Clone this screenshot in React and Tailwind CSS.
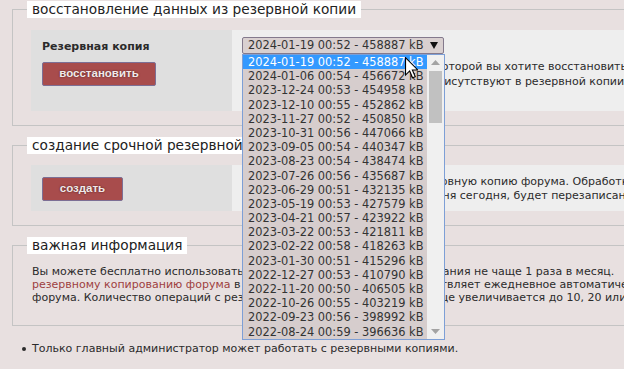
import React from "react";

const backups = [
  ["2024-01-19 00:52", "458887"],
  ["2024-01-06 00:54", "456672"],
  ["2023-12-24 00:53", "454958"],
  ["2023-12-10 00:55", "452862"],
  ["2023-11-27 00:52", "450850"],
  ["2023-10-31 00:56", "447066"],
  ["2023-09-05 00:54", "440347"],
  ["2023-08-23 00:54", "438474"],
  ["2023-07-26 00:56", "435687"],
  ["2023-06-29 00:51", "432135"],
  ["2023-05-19 00:53", "427579"],
  ["2023-04-21 00:57", "423922"],
  ["2023-03-22 00:53", "421811"],
  ["2023-02-22 00:58", "418263"],
  ["2023-01-30 00:51", "415296"],
  ["2022-12-27 00:53", "410790"],
  ["2022-11-20 00:50", "406505"],
  ["2022-10-26 00:55", "403219"],
  ["2022-09-23 00:56", "398992"],
  ["2022-08-24 00:59", "396636"],
];

function Legend({ children }) {
  return (
    <legend className="ml-[14px] bg-white px-[5px] text-[13.7px] leading-[17px] text-[#222]">
      {children}
    </legend>
  );
}

function RedButton({ children, width }) {
  return (
    <button
      className={`${width} h-[24px] rounded-[2px] border border-[#7c6f95] bg-[#a84c4c] font-['Liberation_Sans',Arial,sans-serif] text-[11.5px] font-bold text-[#f1e8e8] [text-shadow:0_0_2px_#4a2020]`}
    >
      {children}
    </button>
  );
}

function Cursor() {
  return (
    <svg
      width="13"
      height="22"
      viewBox="0 0 12 20"
      className="absolute left-[162px] top-[2px]"
    >
      <path
        d="M0.5 0.5 L0.5 16.5 L4.3 12.7 L7 19 L9.5 18 L6.8 11.8 L11.8 11.8 Z"
        fill="#fff"
        stroke="#000"
        strokeWidth="1"
      />
    </svg>
  );
}

function BackupSelect() {
  return (
    <div className="relative w-[202px]">
      <div className="flex h-[17px] items-center justify-between rounded-[2px] border border-[#83798c] bg-[#d9d0d0] pl-[5px] pr-[5px] text-[11.4px] text-[#333]">
        <span>2024-01-19 00:52 - 458887 kB</span>
        <svg width="8" height="7" viewBox="0 0 8 7">
          <path d="M0 0 H8 L4 7 Z" fill="#111" />
        </svg>
      </div>

      <div className="absolute left-0 top-[17px] z-10 flex w-[203px] border border-[#7d9fd6] bg-[#d6cdcd]">
        <ul className="w-[184px]">
          {backups.map(([date, size], i) => (
            <li
              key={date}
              className={`h-[14.2px] whitespace-nowrap pl-[5px] text-[11.4px] leading-[14.2px] ${
                i === 0 ? "bg-[#3399ff] text-white" : "text-[#333]"
              }`}
            >
              {date} - {size} kB
            </li>
          ))}
        </ul>
        <div className="flex w-[17px] flex-col items-center bg-[#f0f0f0]">
          <svg width="9" height="5" viewBox="0 0 9 5" className="mt-[5px]">
            <path d="M0 5 L4.5 0 L9 5 Z" fill="#a3a3a3" />
          </svg>
          <div className="mt-[6px] h-[52px] w-[13px] bg-[#c1c1c1]" />
          <div className="flex-1" />
          <svg width="9" height="5" viewBox="0 0 9 5" className="mb-[5px]">
            <path d="M0 0 L9 0 L4.5 5 Z" fill="#a3a3a3" />
          </svg>
        </div>
        <Cursor />
      </div>
    </div>
  );
}

export default function App() {
  return (
    <div className="h-[369px] w-[624px] overflow-hidden bg-[#e8e0e0] font-['DejaVu_Sans',Verdana,sans-serif] text-[11px] text-[#2b2b2b]">
      <div className="w-[900px] pl-[12px] pt-[1px]">
        <fieldset className="border border-[#c4c4c4] pb-[14px] pt-[12px]">
          <Legend>восстановление данных из резервной копии</Legend>
          <div className="ml-[18px] flex h-[81px]">
            <div className="w-[201px] bg-[#dfdfdf] pl-[11px] pt-[10px]">
              <div className="text-[11px] font-bold leading-[13px] text-[#2b2b2b]">
                Резервная копия
              </div>
              <div className="mt-[9px]">
                <RedButton width="w-[114px]">восстановить</RedButton>
              </div>
            </div>
            <div className="flex-1 bg-[#eeeeee] pl-[10px] pt-[7px]">
              <BackupSelect />
              <div className="mt-[5px] whitespace-nowrap leading-[15px]">
                <div>Выберите резервную версию, из которой вы хотите восстановить данные форума.</div>
                <div>Внимание! Данные, которые не присутствуют в резервной копии, будут удалены.</div>
              </div>
            </div>
          </div>
        </fieldset>

        <fieldset className="mt-[11px] border border-[#c4c4c4] pb-[14px] pt-[11px]">
          <Legend>создание срочной резервной копии</Legend>
          <div className="ml-[18px] flex h-[46px]">
            <div className="w-[201px] bg-[#dfdfdf] pl-[11px] pt-[12px]">
              <RedButton width="w-[81px]">создать</RedButton>
            </div>
            <div className="flex-1 whitespace-nowrap bg-[#eeeeee] pl-[12px] pt-[10px] leading-[14px]">
              <div>Вы можете создать срочную резервную копию форума. Обработка запроса займёт некоторое время.</div>
              <div>Копия созданная уже в течение дня сегодня, будет перезаписана.</div>
            </div>
          </div>
        </fieldset>

        <fieldset className="mt-[11px] border border-[#c4c4c4] pb-[21px] pt-[11px]">
          <Legend>важная информация</Legend>
          <div className="ml-[19px] whitespace-nowrap leading-[13px]">
            <div>Вы можете бесплатно использовать все функции резервного копирования не чаще 1 раза в месяц.</div>
            <div>
              <span className="text-[#9e4040]">резервному копированию форума</span> в платных версиях система осуществляет ежедневное автоматическое создание копий
            </div>
            <div>форума. Количество операций с резервными копиями в течение месяце увеличивается до 10, 20 или 30.</div>
          </div>
        </fieldset>

        <div className="mt-[16px] flex items-center leading-[13px]">
          <span className="ml-[10px] mr-[6px] h-[4px] w-[4px] rounded-full bg-[#2b2b2b]" />
          <span>Только главный администратор может работать с резервными копиями.</span>
        </div>
      </div>
    </div>
  );
}
